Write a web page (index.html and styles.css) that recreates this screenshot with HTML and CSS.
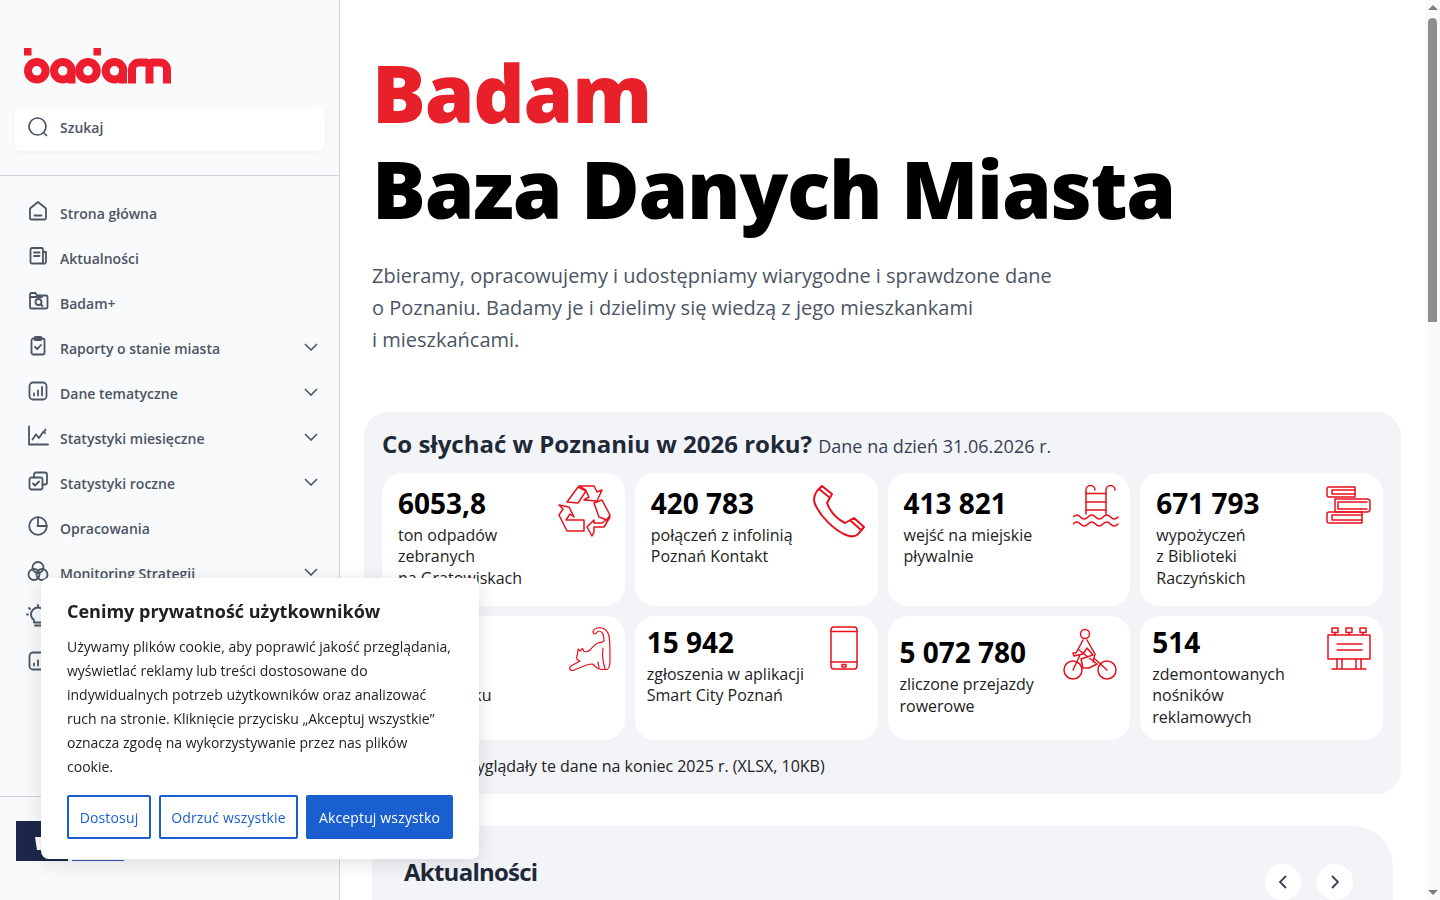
FILE: index.html
```html
<!DOCTYPE html>
<html lang="pl">
<head>
    <meta charset="UTF-8">
    <meta name="viewport" content="width=device-width, initial-scale=1.0">
    <title>Badam - Baza Danych Miasta</title>
    <link rel="stylesheet" href="styles.css">
</head>
<body>

    <!-- Sidebar -->
    <aside class="sidebar">
        <div class="sidebar-top">
            <a class="logo" href="#" aria-label="Badam">
                <svg width="147" height="36" viewBox="0 0 147 36" fill="none" stroke="#ed1c2e" stroke-width="8">
                    <rect x="0" y="0" width="7.5" height="7.5" fill="#ed1c2e" stroke="none"/>
                    <circle cx="12.8" cy="22.8" r="8.800"/>
                    <circle cx="38.8" cy="22.8" r="8.800"/>
                    <rect x="43.500" y="22" width="8" height="13.500" fill="#ed1c2e" stroke="none"/>
                    <circle cx="64" cy="22.8" r="8.800"/>
                    <rect x="69.500" y="0" width="7.5" height="7.5" fill="#ed1c2e" stroke="none"/>
                    <circle cx="90.500" cy="22.8" r="8.800"/>
                    <rect x="95" y="22" width="8" height="13.500" fill="#ed1c2e" stroke="none"/>
                    <path d="M108 35.500V21.500a7 7 0 0 1 7-7h7a3.500 3.500 0 0 1 3.500 3.500v17.500M125.500 18a3.500 3.500 0 0 1 3.500-3.500h7a7 7 0 0 1 7 7v14"/>
                </svg>
            </a>
            <div class="search">
                <svg class="search-icon" width="22" height="22" viewBox="0 0 22 22" fill="none" stroke="#4b5563" stroke-width="1.700" stroke-linecap="round">
                    <circle cx="10.500" cy="10.500" r="8.500"/>
                    <path d="M17 17l2.500 2.500"/>
                </svg>
                <span>Szukaj</span>
            </div>
        </div>

        <nav class="nav">
            <a class="nav-item" href="#">
                <svg class="nav-icon" viewBox="0 0 24 24"><path d="M4 9.500L12 3l8 6.500V19a1.500 1.500 0 0 1-1.500 1.500h-13A1.500 1.500 0 0 1 4 19z"/><path d="M8.500 16.500h7"/></svg>
                <span>Strona główna</span>
            </a>
            <a class="nav-item" href="#">
                <svg class="nav-icon" viewBox="0 0 24 24"><path d="M17 19.500H6A1.500 1.500 0 0 1 4.500 18V5.500A1.500 1.500 0 0 1 6 4h9.500A1.500 1.500 0 0 1 17 5.500V19.500a2 2 0 0 0 3-1.500V8h-3"/><path d="M8 8.500h5.500M8 12h5.500"/></svg>
                <span>Aktualności</span>
            </a>
            <a class="nav-item" href="#">
                <svg class="nav-icon" viewBox="0 0 24 24"><path d="M4 8V5.500A1.500 1.500 0 0 1 5.500 4h4l1.500 2.500h9A1.500 1.500 0 0 1 21.500 8v10a1.500 1.500 0 0 1-1.500 1.500H5.500A1.500 1.500 0 0 1 4 18z"/><path d="M4 8h12"/><circle cx="12.500" cy="13" r="3"/><path d="M15 15.500l1.500 1.500"/></svg>
                <span>Badam+</span>
            </a>
            <a class="nav-item" href="#">
                <svg class="nav-icon" viewBox="0 0 24 24"><rect x="5.500" y="4.500" width="13" height="16" rx="2"/><rect x="8.500" y="3" width="7" height="3" rx="1"/><path d="M9 13l2.200 2.200L15 11"/></svg>
                <span>Raporty o stanie miasta</span>
                <svg class="nav-chevron" viewBox="0 0 14 8"><path d="M1 1l6 6 6-6"/></svg>
            </a>
            <a class="nav-item" href="#">
                <svg class="nav-icon" viewBox="0 0 24 24"><rect x="3.500" y="3.500" width="17" height="17" rx="3.500"/><path d="M8 16.500v-2M12 16.500v-5M16 16.500V8"/></svg>
                <span>Dane tematyczne</span>
                <svg class="nav-chevron" viewBox="0 0 14 8"><path d="M1 1l6 6 6-6"/></svg>
            </a>
            <a class="nav-item" href="#">
                <svg class="nav-icon" viewBox="0 0 24 24"><path d="M3 2.500V20.500H22"/><path d="M6.500 15.500L10 10.500l3 3.500 4.500-6.500 1.500 1.500M19 5.500l.5 1"/></svg>
                <span>Statystyki miesięczne</span>
                <svg class="nav-chevron" viewBox="0 0 14 8"><path d="M1 1l6 6 6-6"/></svg>
            </a>
            <a class="nav-item" href="#">
                <svg class="nav-icon" viewBox="0 0 24 24"><rect x="3.500" y="8.500" width="13" height="12" rx="2"/><path d="M8 8.500V5.500a2 2 0 0 1 2-2h9a2 2 0 0 1 2 2v8a2 2 0 0 1-2 2h-2.500"/><path d="M7 14.500l2 2 4-4"/></svg>
                <span>Statystyki roczne</span>
                <svg class="nav-chevron" viewBox="0 0 14 8"><path d="M1 1l6 6 6-6"/></svg>
            </a>
            <a class="nav-item" href="#">
                <svg class="nav-icon" viewBox="0 0 24 24"><circle cx="12" cy="12" r="8.800"/><path d="M12 3.200V12h8.800M12 12l-.5 0"/></svg>
                <span>Opracowania</span>
            </a>
            <a class="nav-item" href="#">
                <svg class="nav-icon" viewBox="0 0 24 24"><circle cx="12" cy="8.500" r="5.500"/><circle cx="8" cy="15.500" r="5.500"/><circle cx="16" cy="15.500" r="5.500"/></svg>
                <span>Monitoring Strategii</span>
                <svg class="nav-chevron" viewBox="0 0 14 8"><path d="M1 1l6 6 6-6"/></svg>
            </a>
            <a class="nav-item" href="#">
                <svg class="nav-icon" viewBox="0 0 24 24"><path d="M8 16c-2-1.500-3-3.500-3-5.500a7 7 0 0 1 14 0c0 2-1 4-3 5.500v2.500H8z"/><path d="M9 21.500h6M12 1v1.500M2 10.500H1M3 4l1 1"/></svg>
                <span>Innowacje</span>
            </a>
            <a class="nav-item" href="#">
                <svg class="nav-icon" viewBox="0 0 24 24"><rect x="3.500" y="3.500" width="17" height="17" rx="3.500"/><path d="M8 16.500v-2M12 16.500v-5M16 16.500V8"/></svg>
                <span>Dashboardy</span>
            </a>
        </nav>

        <div class="sidebar-footer">
            <div class="partner partner-dark">
                <svg class="partner-mark" width="18" height="16" viewBox="0 0 18 16"><path d="M2 3h16v13H4z" fill="#fff"/></svg>
            </div>
            <div class="partner partner-blue"></div>
        </div>
    </aside>

    <!-- Main content -->
    <main class="content">
        <section class="hero">
            <h1><span class="hero-red">Badam</span><br>Baza Danych Miasta</h1>
            <p>Zbieramy, opracowujemy i udostępniamy wiarygodne i sprawdzone dane<br>o Poznaniu. Badamy je i dzielimy się wiedzą z jego mieszkankami<br>i mieszkańcami.</p>
        </section>

        <section class="stats">
            <h2>Co słychać w Poznaniu w 2026 roku? <small>Dane na dzień 31.06.2026 r.</small></h2>

            <div class="stats-grid">
                <div class="stat-card">
                    <div>
                        <div class="stat-number">6053,8</div>
                        <div class="stat-text">ton odpadów<br>zebranych<br>na Gratowiskach</div>
                    </div>
                    <svg class="stat-icon icon-recycle" viewBox="0 0 53 53">
                        <path d="M9 17L20 2l8 4-8 12z"/>
                        <path d="M21 1h15l3 6 5-2-5 11-13-1 5-3-3.500-7z"/>
                        <path d="M36 18l8-3 8 15-3 5-8-3z"/>
                        <path d="M52 32l-6 10H36v5l-2 4-5-9 7-7v3h8z"/>
                        <path d="M1 20l10 2 5 10-4-3-4 6h18v11H9L1 30l4-6z"/>
                    </svg>
                </div>
                <div class="stat-card">
                    <div>
                        <div class="stat-number">420 783</div>
                        <div class="stat-text">połączeń z infolinią<br>Poznań Kontakt</div>
                    </div>
                    <svg class="stat-icon icon-phone" viewBox="0 0 54 53">
                        <path d="M10 1L20 9l-5 9c3 8 10 16 18 20l9-5 10 9-5 6c-3 4-8 4-13 2C22 45 8 31 3 19 1 14 2 10 5 6z"/>
                        <path d="M7 4l10 8M39 36l10 9"/>
                    </svg>
                </div>
                <div class="stat-card">
                    <div>
                        <div class="stat-number">413 821</div>
                        <div class="stat-text">wejść na miejskie<br>pływalnie</div>
                    </div>
                    <svg class="stat-icon icon-pool" viewBox="0 0 46 43">
                        <path d="M13 30V6a4.500 4.500 0 0 1 9 0M33 30V6a4.500 4.500 0 0 1 9 0"/>
                        <path d="M13 9.500h20M13 18h20M13 26h20"/>
                        <path d="M0 33q3.750-4 7.500 0t7.500 0 7.500 0 7.500 0 7.500 0 7.500 0M0 40q3.750-4 7.500 0t7.500 0 7.500 0 7.500 0 7.500 0 7.500 0"/>
                    </svg>
                </div>
                <div class="stat-card">
                    <div>
                        <div class="stat-number">671 793</div>
                        <div class="stat-text">wypożyczeń<br>z Biblioteki<br>Raczyńskich</div>
                    </div>
                    <svg class="stat-icon icon-books" viewBox="0 0 45 38">
                        <path d="M3 1h26v10H3a2 2 0 0 1-2-2V3a2 2 0 0 1 2-2z"/>
                        <path d="M29 4H6v4h23"/>
                        <path d="M9 13h32a3 3 0 0 1 3 3v7a3 3 0 0 1-3 3H9z"/>
                        <path d="M41 16H12v7h29"/>
                        <path d="M3 26h33v11H3a2 2 0 0 1-2-2v-7a2 2 0 0 1 2-2z"/>
                        <path d="M36 29H6v5h30"/>
                    </svg>
                </div>

                <div class="stat-card stat-card--tight">
                    <div>
                        <div class="stat-number">1 206</div>
                        <div class="stat-text">adopcji<br>w schronisku</div>
                    </div>
                    <svg class="stat-icon icon-cat" viewBox="0 -1 43 44">
                        <path d="M24 3C26 0 30-1 33 0c4 1 6 4 7 8 1 4 1 14 1 22 0 6 0 10-3 11.500h-6L28 40l-4.500-4c-3.500 0-6.500 1-8.500 2L4 42.500C1 43-.5 40 2 38l9-5-3-1.500c-.5-2.500 0-4.500.5-5.500L9 21l2 2 2.500-2.500 1.500 3c2 .5 4 .5 6-1.500 3-3 5-6 8-7s6 0 6-3c0-5-2-9-5-9-2 0-3 3-4 3s-2-1-2-3z"/>
                        <path d="M34 20c-1 6 0 14 2 21M30 40l-1-6"/>
                    </svg>
                </div>
                <div class="stat-card stat-card--tight">
                    <div>
                        <div class="stat-number">15 942</div>
                        <div class="stat-text">zgłoszenia w aplikacji<br>Smart City Poznań</div>
                    </div>
                    <svg class="stat-icon icon-mobile" viewBox="0 0 28 44">
                        <rect x="1" y="1" width="26" height="42" rx="3"/>
                        <path d="M1 5.500h26M1 36h26"/>
                        <rect x="12" y="38.500" width="4" height="2.500"/>
                    </svg>
                </div>
                <div class="stat-card stat-card--mid">
                    <div>
                        <div class="stat-number">5 072 780</div>
                        <div class="stat-text">zliczone przejazdy<br>rowerowe</div>
                    </div>
                    <svg class="stat-icon icon-bike" viewBox="0 0 54 53">
                        <circle cx="10" cy="42" r="9"/>
                        <circle cx="44" cy="42" r="9"/>
                        <circle cx="22" cy="6" r="4.500"/>
                        <path d="M20 12l-7 13h-3l1 3 9-2 4-6 6 7-12 4 2 9h6l8-4-18-14M24 12l8 14-2 8M10 42l7-15M44 42L32 31"/>
                    </svg>
                </div>
                <div class="stat-card stat-card--tight">
                    <div>
                        <div class="stat-number">514</div>
                        <div class="stat-text">zdemontowanych<br>nośników<br>reklamowych</div>
                    </div>
                    <svg class="stat-icon icon-board" viewBox="0 0 44 43">
                        <rect x="1" y="8" width="42" height="24"/>
                        <rect x="5" y="1" width="6" height="4.500"/>
                        <rect x="19" y="1" width="6" height="4.500"/>
                        <rect x="33" y="1" width="6" height="4.500"/>
                        <path d="M8 5.500V8M22 5.500V8M36 5.500V8M10 17h25M10 23h25M10 32v10M15 32v10M29 32v10M34 32v10M5 42h34"/>
                    </svg>
                </div>
            </div>

            <a class="stats-link" href="#">Zobacz jak wyglądały te dane na koniec 2025 r. (XLSX, 10KB)</a>
        </section>

        <section class="news">
            <div class="news-head">
                <h2>Aktualności</h2>
                <div class="news-arrows">
                    <button type="button" aria-label="Poprzednie">
                        <svg width="10" height="14" viewBox="0 0 10 14"><path d="M8 1L2 7l6 6"/></svg>
                    </button>
                    <button type="button" aria-label="Następne">
                        <svg width="10" height="14" viewBox="0 0 10 14"><path d="M2 1l6 6-6 6"/></svg>
                    </button>
                </div>
            </div>
        </section>
    </main>

    <!-- Cookie dialog -->
    <div class="cookie" role="dialog">
        <h3>Cenimy prywatność użytkowników</h3>
        <p>Używamy plików cookie, aby poprawić jakość przeglądania, wyświetlać reklamy lub treści dostosowane do indywidualnych potrzeb użytkowników oraz analizować ruch na stronie. Kliknięcie przycisku „Akceptuj wszystkie” oznacza zgodę na wykorzystywanie przez nas plików cookie.</p>
        <div class="cookie-buttons">
            <button type="button" class="btn-outline">Dostosuj</button>
            <button type="button" class="btn-outline">Odrzuć wszystkie</button>
            <button type="button" class="btn-primary">Akceptuj wszystko</button>
        </div>
    </div>

    <!-- Window scrollbar -->
    <div class="scrollbar">
        <span class="scroll-up"></span>
        <span class="scroll-thumb"></span>
        <span class="scroll-down"></span>
    </div>

</body>
</html>
```
FILE: styles.css
```css
* {
    box-sizing: border-box;
}

body {
    font-family: "Open Sans", "Noto Sans", sans-serif;
    background-color: white;
    color: #111827;
    margin: 0;
    padding: 0;
}

a {
    color: inherit;
    text-decoration: none;
}

/* Sidebar */
.sidebar {
    position: fixed;
    top: 0;
    left: 0;
    bottom: 0;
    width: 340px;
    display: flex;
    flex-direction: column;
    background-color: #f9fafb;
    border-right: 1px solid #d1d5db;
}

.sidebar-top {
    height: 176px;
    flex-shrink: 0;
    padding: 48px 14px 0;
    border-bottom: 1px solid #d1d5db;
}

.logo {
    display: block;
    height: 36px;
    margin-left: 10px;
}

.search {
    display: flex;
    align-items: center;
    gap: 11px;
    height: 44px;
    margin-top: 23px;
    padding: 0 13px 4px;
    width: 311px;
    background-color: white;
    border-radius: 8px;
    box-shadow: 0 1px 4px rgba(0, 0, 0, 0.05);
    font-size: 14px;
    font-weight: 600;
    color: #4b5563;
}

.nav {
    flex: 1;
    overflow: hidden;
    padding: 15px 14px 0 26px;
}

.nav-item {
    display: flex;
    align-items: center;
    height: 45px;
    font-size: 14px;
    font-weight: 600;
    color: #4b5563;
}

.nav-item span {
    flex: 1;
    margin-left: 10px;
}

.nav-icon {
    width: 24px;
    height: 24px;
    margin-bottom: 6px;
    fill: none;
    stroke: #4b5563;
    stroke-width: 1.800;
    stroke-linecap: round;
    stroke-linejoin: round;
}

.nav-chevron {
    width: 14px;
    height: 8px;
    margin-right: 7px;
    margin-bottom: 4px;
    fill: none;
    stroke: #4b5563;
    stroke-width: 1.600;
}

.sidebar-footer {
    display: flex;
    gap: 4px;
    flex-shrink: 0;
    height: 104px;
    padding: 24px 16px 0;
    border-top: 1px solid #d1d5db;
}

.partner {
    width: 52px;
    height: 40px;
    display: flex;
    align-items: center;
    justify-content: center;
}

.partner-dark {
    background-color: #1c2749;
}

.partner-blue {
    background-color: #f9fafb;
    border-bottom: 1px solid #3b5bb5;
}

.partner-mark {
    margin-top: 2px;
}

/* Main */
.content {
    margin-left: 340px;
    margin-right: 15px;
    min-height: 2558px;
}

.hero {
    padding: 44px 32px 0;
}

.hero h1 {
    margin: 0;
    font-size: 80px;
    line-height: 96px;
    font-weight: 800;
    letter-spacing: -1.2px;
    color: black;
}

.hero-red {
    color: #e8202a;
}

.hero p {
    margin: 24px 0 0;
    font-size: 20px;
    line-height: 32px;
    color: #4b5563;
}

.stats {
    margin: 56px 24px 0;
    padding: 15px 18px 0;
    height: 382px;
    background-color: #f2f4f8;
    border-radius: 24px;
}

.stats h2 {
    margin: 0;
    height: 46px;
    font-size: 24px;
    line-height: 33px;
    font-weight: 700;
    color: #1f2937;
}

.stats h2 small {
    font-size: 18px;
    font-weight: 400;
    color: #374151;
}

.stats-grid {
    display: grid;
    grid-template-columns: repeat(4, 1fr);
    grid-template-rows: 133px 124px;
    gap: 10px;
}

.stat-card {
    display: flex;
    justify-content: space-between;
    align-items: flex-start;
    padding: 12px 12px 0 16px;
    background-color: white;
    border-radius: 20px;
    overflow: hidden;
}

.stat-card--tight {
    padding: 8px 12px 0 12px;
}

.stat-card--mid {
    padding: 18.300px 12px 0 12px;
}

.stat-number {
    font-size: 28px;
    line-height: 36px;
    font-weight: 700;
    color: black;
}

.stat-text {
    margin-top: 3.700px;
    font-size: 16px;
    line-height: 21.600px;
    color: #222;
}

.stat-icon {
    flex-shrink: 0;
    fill: none;
    stroke: #e6101c;
    stroke-width: 1.500;
    stroke-linejoin: round;
    stroke-linecap: round;
}

.icon-recycle {
    width: 53px;
    height: 53px;
    margin-right: 2px;
}

.icon-phone {
    width: 54px;
    height: 53px;
    stroke-width: 2;
}

.icon-pool {
    width: 46px;
    height: 43px;
    margin-top: -1px;
    margin-right: -1px;
}

.icon-books {
    width: 45px;
    height: 38px;
    margin-top: 1px;
}

.icon-cat {
    width: 43px;
    height: 44px;
    margin-top: 3px;
    margin-right: 1px;
    stroke-width: 1.200;
}

.icon-mobile {
    width: 28px;
    height: 44px;
    margin-top: 2px;
    margin-right: 8px;
}

.icon-bike {
    width: 54px;
    height: 53px;
    margin-top: -6px;
    margin-right: 1px;
}

.icon-board {
    width: 44px;
    height: 43px;
    margin-top: 3px;
}

.stats-link {
    display: block;
    margin-top: 15px;
    font-size: 16px;
    line-height: 22px;
    color: #222;
}

.news {
    margin: 32px 32px 0;
    padding: 29px 40px 0 32px;
    height: 1500px;
    background-color: #f2f4f8;
    border-radius: 40px;
}

.news-head {
    display: flex;
    justify-content: space-between;
    align-items: flex-start;
}

.news h2 {
    margin: 0;
    font-size: 24px;
    line-height: 33px;
    font-weight: 700;
    letter-spacing: -0.750px;
    color: #1f2937;
}

.news-arrows {
    display: flex;
    gap: 16px;
    margin-top: 9px;
}

.news-arrows button {
    width: 36px;
    height: 36px;
    display: flex;
    align-items: center;
    justify-content: center;
    padding: 0;
    border: none;
    border-radius: 50%;
    background-color: white;
}

.news-arrows svg {
    fill: none;
    stroke: #374151;
    stroke-width: 1.800;
}

/* Cookie dialog */
.cookie {
    position: fixed;
    left: 41px;
    bottom: 41px;
    width: 438px;
    height: 281px;
    padding: 21px 26px;
    background-color: white;
    border-radius: 8px;
    box-shadow: 0 4px 20px rgba(0, 0, 0, 0.12);
}

.cookie h3 {
    margin: 0;
    font-size: 18px;
    line-height: 24px;
    font-weight: 700;
    color: #212121;
}

.cookie p {
    margin: 12px 0 0;
    font-size: 14px;
    line-height: 24px;
    color: #212121;
}

.cookie-buttons {
    display: grid;
    grid-template-columns: 84px 139px 147px;
    gap: 8px;
    margin-top: 16px;
}

.cookie-buttons button {
    height: 44px;
    padding: 0;
    font-family: inherit;
    font-size: 14px;
    font-weight: 500;
    letter-spacing: 0.150px;
    border-radius: 2px;
    border: 2px solid #1a5fd0;
}

.btn-outline {
    background-color: white;
    color: #1a5fd0;
}

.btn-primary {
    background-color: #1a5fd0;
    color: white;
}

.scrollbar {
    position: fixed;
    top: 0;
    right: 0;
    bottom: 0;
    width: 15px;
    display: flex;
    flex-direction: column;
    align-items: center;
    background-color: #fafafa;
}

.scroll-up,
.scroll-down {
    width: 0;
    height: 0;
    border-left: 5px solid transparent;
    border-right: 5px solid transparent;
}

.scroll-up {
    margin-top: 5px;
    border-bottom: 5px solid #7f7f7f;
}

.scroll-thumb {
    width: 9px;
    height: 304px;
    margin-top: 8px;
    border-radius: 5px 5px 0 0;
    background-color: #8f8f8f;
}

.scroll-down {
    margin-top: auto;
    margin-bottom: 5px;
    border-top: 5px solid #7f7f7f;
}
```
